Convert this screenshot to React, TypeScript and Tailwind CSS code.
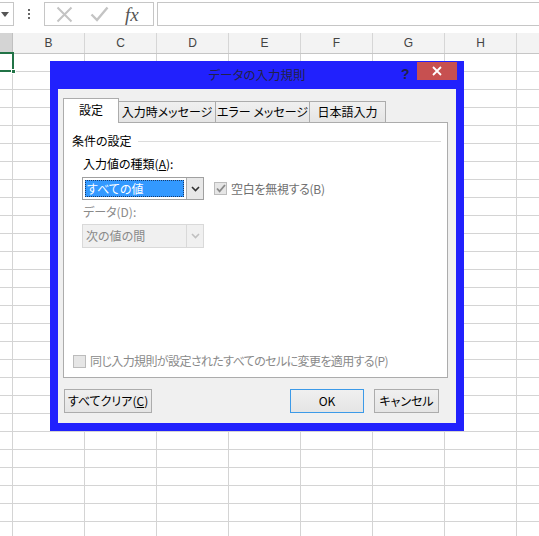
import React from "react";

const UI_FONT = {
  fontFamily: '"Noto Sans CJK JP", "Noto Sans", sans-serif',
  fontFeatureSettings: '"palt"',
};
const COLS = ["B", "C", "D", "E", "F", "G", "H", ""];
const ROW_COUNT = 27;

function Chevron({ color }: { color: string }) {
  return (
    <svg width="9" height="6" viewBox="0 0 9 6" fill="none">
      <path d="M1 1l3.5 3.5L8 1" stroke={color} strokeWidth="1.6" />
    </svg>
  );
}

function CheckBox({ checked }: { checked?: boolean }) {
  return (
    <div className="flex h-[13px] w-[13px] shrink-0 items-center justify-center border border-[#bcbcbc] bg-[#e6e6e6]">
      {checked && (
        <svg width="10" height="9" viewBox="0 0 10 9" fill="none">
          <path d="M1 4.5l2.6 2.8L9 1" stroke="#8a8a8a" strokeWidth="1.8" />
        </svg>
      )}
    </div>
  );
}

function Toolbar() {
  return (
    <div className="relative h-[33px] bg-white">
      {/* name box */}
      <div className="absolute left-0 top-[2px] flex h-[24px] w-[14px] items-center border-y border-r border-[#c6c6c6] pl-[1px]">
        <svg width="8" height="5" viewBox="0 0 8 5">
          <path d="M0 0h8L4 5z" fill="#555" />
        </svg>
      </div>
      {/* dots */}
      <div className="absolute left-[28px] top-[9px] flex flex-col gap-[2px]">
        <div className="h-[2px] w-[2px] bg-[#666]" />
        <div className="h-[2px] w-[2px] bg-[#666]" />
        <div className="h-[2px] w-[2px] bg-[#666]" />
      </div>
      {/* cancel / enter / fx */}
      <div className="absolute left-[44px] top-[2px] flex h-[24px] w-[110px] items-center border border-[#c6c6c6] bg-white">
        <svg className="ml-[11px]" width="17" height="17" viewBox="0 0 17 17" fill="none">
          <path d="M1.5 1.5l14 14M15.5 1.5l-14 14" stroke="#c4c4c4" strokeWidth="2" />
        </svg>
        <svg className="ml-[17px]" width="19" height="16" viewBox="0 0 19 16" fill="none">
          <path d="M1.5 8.5l5.5 5.5L17.5 1.5" stroke="#c4c4c4" strokeWidth="2.4" />
        </svg>
        <span
          className="ml-[16px] text-[19px] italic leading-none text-[#555]"
          style={{ fontFamily: '"Liberation Serif", serif' }}
        >
          fx
        </span>
      </div>
      {/* formula input */}
      <div className="absolute left-[157px] top-[2px] h-[24px] w-[400px] border border-[#c6c6c6] bg-white" />
    </div>
  );
}

function Grid() {
  return (
    <div style={{ fontFamily: '"Liberation Sans", Arial, sans-serif' }}>
      <div className="flex h-[21px] border-b border-[#c6c6c6] bg-[#f3f3f3]">
        <div className="h-full w-[13px] shrink-0 border-r border-[#c0c0c0] bg-[#d4d4d4]" />
        {COLS.map((c, i) => (
          <div
            key={i}
            className="flex h-full w-[72px] shrink-0 items-center justify-center border-r border-[#d6d6d6] text-[12px] text-[#444]"
          >
            {c}
          </div>
        ))}
      </div>
      {Array.from({ length: ROW_COUNT }).map((_, r) => (
        <div key={r} className="flex h-[18px] border-b border-[#d4d4d4]">
          <div className="h-full w-[13px] shrink-0 border-r border-[#d4d4d4]" />
          {COLS.map((_, i) => (
            <div key={i} className="h-full w-[72px] shrink-0 border-r border-[#d4d4d4]" />
          ))}
        </div>
      ))}
    </div>
  );
}

function Tab({ label, active, width }: { label: string; active?: boolean; width: number }) {
  if (active) {
    return (
      <div
        className="relative z-10 -mb-px flex h-[25px] shrink-0 items-center justify-center whitespace-nowrap border border-b-0 border-[#acacac] bg-white pb-[2px] text-[12px] text-black"
        style={{ width }}
      >
        {label}
      </div>
    );
  }
  return (
    <div
      className="-ml-px flex h-[21px] shrink-0 items-center justify-center whitespace-nowrap border border-b-0 border-[#acacac] bg-gradient-to-b from-[#f0f0f0] to-[#e5e5e5] text-[12px] text-black"
      style={{ width: width + 1 }}
    >
      {label}
    </div>
  );
}

function Button({
  children,
  width,
  primary,
}: {
  children: React.ReactNode;
  width: number;
  primary?: boolean;
}) {
  return (
    <div
      className={`flex h-[24px] shrink-0 items-center justify-center whitespace-nowrap border bg-gradient-to-b from-[#f0f0f0] to-[#e5e5e5] text-[12px] text-black ${
        primary ? "border-[#3c9ae8]" : "border-[#acacac]"
      }`}
      style={{ width }}
    >
      {children}
    </div>
  );
}

function ValidationDialog() {
  return (
    <div
      className="absolute left-[50px] top-[61px] flex h-[370px] w-[414px] flex-col whitespace-nowrap bg-[#2121fd]"
      style={UI_FONT}
    >
      {/* title bar */}
      <div className="relative flex h-[28px] shrink-0 items-center justify-center">
        <span className="text-[12.5px] text-[#22224a]">データの入力規則</span>
        <span
          className="absolute left-[351px] top-[3px] text-[14px] font-bold text-[#222244]"
          style={{ fontFamily: '"Liberation Sans", Arial, sans-serif' }}
        >
          ?
        </span>
        <div className="absolute left-[367px] top-[1px] flex h-[18px] w-[40px] items-center justify-center bg-[#c75050]">
          <svg width="10" height="10" viewBox="0 0 10 10" fill="none">
            <path d="M1 1l8 8M9 1L1 9" stroke="#fff" strokeWidth="1.8" />
          </svg>
        </div>
      </div>

      {/* client area */}
      <div className="mx-[8px] mb-[8px] flex flex-1 flex-col bg-[#f0f0f0] pl-[5px] pr-[8px] pt-[9px]">
        <div className="flex items-end">
          <Tab label="設定" active width={56} />
          <Tab label="入力時メッセージ" width={97} />
          <Tab label="エラー メッセージ" width={94} />
          <Tab label="日本語入力" width={76} />
        </div>

        <div className="flex h-[256px] flex-col border border-[#acacac] bg-white pb-[8px] pl-[8px] pt-[10px] text-[12px]">
          <div className="flex h-[16px] items-center">
            <span className="text-black">条件の設定</span>
            <div className="ml-[6px] mr-[6px] h-px flex-1 bg-[#dcdcdc]" />
          </div>

          <div className="ml-[11px] mt-[7px] flex h-[16px] items-center text-black">
            入力値の種類(<span className="underline">A</span>):
          </div>

          <div className="ml-[10px] mt-[5px] flex items-center">
            <div className="flex h-[23px] w-[122px] border border-[#a0a0a0] bg-white">
              <div className="m-[2px] flex flex-1 items-center border border-dotted border-[#1b3a66] bg-[#3399ff] pl-[1px] text-white">
                すべての値
              </div>
              <div className="flex w-[17px] items-center justify-center border-l border-[#acacac] bg-[#e8e8e8]">
                <Chevron color="#333" />
              </div>
            </div>
            <div className="ml-[10px] flex items-center">
              <CheckBox checked />
              <span className="ml-[4px] tracking-[-0.3px] text-[#707070]">空白を無視する(B)</span>
            </div>
          </div>

          <div className="ml-[11px] mt-[4px] flex h-[16px] items-center text-[#8a8a8a]">データ(D):</div>

          <div className="ml-[10px] mt-[4px] flex h-[24px] w-[122px] border border-[#d9d9d9] bg-[#f0f0f0]">
            <div className="flex flex-1 items-center pl-[3px] text-[#8a8a8a]">次の値の間</div>
            <div className="flex w-[17px] items-center justify-center border-l border-[#d9d9d9]">
              <Chevron color="#c0c0c0" />
            </div>
          </div>

          <div className="mt-auto flex h-[16px] items-center pl-[1px]">
            <CheckBox />
            <span className="ml-[4px] tracking-[-0.6px] text-[#8a8a8a]">
              同じ入力規則が設定されたすべてのセルに変更を適用する(P)
            </span>
          </div>
        </div>

        <div className="mt-[11px] flex items-center pl-[1px] pr-[9px]">
          <Button width={88}>
            すべてクリア(<span className="underline">C</span>)
          </Button>
          <div className="flex-1" />
          <Button width={74} primary>
            OK
          </Button>
          <div className="w-[10px]" />
          <Button width={65}>キャンセル</Button>
        </div>
      </div>
    </div>
  );
}

export default function App() {
  return (
    <div className="relative h-[536px] w-[539px] overflow-hidden bg-white">
      <Toolbar />
      <Grid />

      {/* active cell A1 */}
      <div className="absolute left-[-5px] top-[52px] h-[20px] w-[19px] border-2 border-[#217346]" />
      <div className="absolute left-[11px] top-[69px] h-[5px] w-[5px] border border-white bg-[#217346]" />

      <ValidationDialog />
    </div>
  );
}
